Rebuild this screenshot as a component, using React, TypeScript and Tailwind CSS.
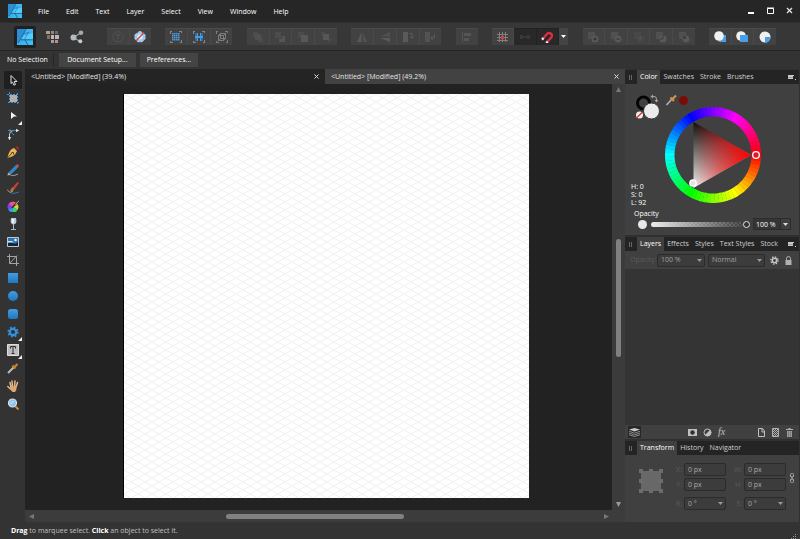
import type { ReactNode } from "react";
import { clsx } from "clsx";

/* ---------- data ---------- */

const menus = ["File", "Edit", "Text", "Layer", "Select", "View", "Window", "Help"];

const wheelStep = 5;
const wheelSegments = Array.from({ length: 360 / wheelStep }, (_, i) => i * wheelStep);

function ringPath(start: number, end: number, outer: number, inner: number) {
  const point = (deg: number, r: number) => {
    const a = (deg * Math.PI) / 180;
    return `${(48 + r * Math.cos(a)).toFixed(2)} ${(48 + r * Math.sin(a)).toFixed(2)}`;
  };
  return `M${point(start, outer)}A${outer} ${outer} 0 0 1 ${point(end, outer)}L${point(end, inner)}A${inner} ${inner} 0 0 0 ${point(start, inner)}Z`;
}

/* ---------- shared bits ---------- */

function Svg({ size = 12, children, className }: { size?: number; children: ReactNode; className?: string }) {
  return (
    <svg width={size} height={size} viewBox={`0 0 ${size} ${size}`} fill="none" className={clsx("shrink-0", className)} aria-hidden="true">
      {children}
    </svg>
  );
}

function Caret({ className }: { className?: string }) {
  return (
    <svg width="5" height="3" viewBox="0 0 5 3" className={className} aria-hidden="true">
      <path d="M0 0h5L2.500 3z" fill="currentColor" />
    </svg>
  );
}

function DesignerLogo({ size }: { size: number }) {
  return (
    <svg width={size} height={size} viewBox="0 0 16 16" aria-hidden="true">
      <defs>
        <linearGradient id="logo" x1="0" y1="0" x2="1" y2="1">
          <stop offset="0" stopColor="#2f9ee4" />
          <stop offset="1" stopColor="#3cc4f8" />
        </linearGradient>
      </defs>
      <rect width="16" height="16" fill="url(#logo)" />
      <path d="M0 0h8.500L0 14z" fill="#2a8fd6" />
      <path d="M9 0h7v2L6.500 5z" fill="#45b4f0" />
      <path d="M7 6.500 16 4v6.500H4.500z" fill="#57cbfa" />
      <path d="M9.200 0 1 14M3.500 10.800H16M8 10.800l3 5.200" stroke="#17507c" strokeWidth=".8" fill="none" />
      <path d="M11.500 3.500 7.200 10.800M6.500 5 12 3" stroke="#1f6ea6" strokeWidth=".6" fill="none" />
    </svg>
  );
}

/* ---------- toolbar ---------- */

function ToolButton({ label, children, dark }: { label: string; children: ReactNode; dark?: boolean }) {
  return (
    <button
      type="button"
      aria-label={label}
      className={clsx(
        "flex h-full flex-1 items-center justify-center border-t",
        dark ? "border-[#222222] bg-[#282828]" : "border-[#4a4a4a] bg-[#424242]"
      )}
    >
      {children}
    </button>
  );
}

function ToolGroup({ className, children }: { className: string; children: ReactNode }) {
  return <div className={clsx("flex h-[17px] divide-x divide-[#383838]", className)}>{children}</div>;
}

const flower = "M6 .5a2.300 2.300 0 0 1 2.300 2 2.300 2.300 0 0 1 2.600 3.300 2.300 2.300 0 0 1-1.400 3.200A2.300 2.300 0 0 1 6 10.500 2.300 2.300 0 0 1 2.500 9a2.300 2.300 0 0 1-1.400-3.200 2.300 2.300 0 0 1 2.600-3.300A2.300 2.300 0 0 1 6 .5z";

const corners = "M.5 2.500v-2h2M9.500.5h2v2M11.500 9.500v2h-2M2.500 11.500h-2v-2";

function DotGrid({ soft }: { soft?: boolean }) {
  const dots = [2, 4, 6, 8];
  return (
    <Svg>
      <path d={corners} stroke="#c8c8c8" strokeDasharray="1 1" />
      {soft && <path d="M2 2h3v3H2zM7 2h3v3H7zM2 7h3v3H2zM7 7h3v3H7z" fill="#2f6ca3" />}
      {soft
        ? <path d="M4 2h1v8H4zM7 2h1v8H7zM2 5h8v2H2z" fill="#4a9ade" />
        : dots.map((y) => dots.map((x) => <rect key={`${x}-${y}`} x={x} y={y} width={1.500} height={1.500} fill="#4a9ade" />))}
    </Svg>
  );
}

function BooleanIcon({ kind }: { kind: "add" | "subtract" | "intersect" | "divide" | "combine" }) {
  return (
    <Svg>
      <path d="M1 1h7v7H1z" fill={kind === "intersect" ? "#474747" : "#505050"} />
      <circle cx="8" cy="8" r="3.500" fill={kind === "intersect" ? "#484848" : "#585858"} />
      {kind === "add" && <path d="M8 6.500v3M6.500 8h3" stroke="#2c2c2c" />}
      {kind === "subtract" && <path d="M6.500 8h3" stroke="#2c2c2c" />}
      {kind === "intersect" && <path d="M5 8h3V5" fill="#555555" />}
      {kind === "divide" && <path d="M5 8h3V5" stroke="#3d3d3d" />}
      {kind === "combine" && <path d="M5 5h3v3H5z" fill="#3f3f3f" />}
    </Svg>
  );
}

function Toolbar() {
  return (
    <div role="toolbar" className="flex h-[29px] shrink-0 items-center border-y border-t-[#2e2e2e] border-b-[#262626] bg-[#373737] pr-6 pl-[14px]">
      <div className="flex w-[93px] shrink-0 items-center">
        <button type="button" aria-label="Designer Persona" className="flex h-[22px] w-[22px] items-center justify-center rounded-xs bg-[#202020]">
          <DesignerLogo size={16} />
        </button>
        <button type="button" aria-label="Pixel Persona" className="ml-[9px]">
          <Svg size={14}>
            <path d="M1 1h4v3H1z" fill="#b59a8e" />
            <path d="M6 1h3v3H6z" fill="#8f8580" />
            <path d="M10 1h3v3h-3z" fill="#6b6b6b" />
            <path d="M2 5h3v4H2z" fill="#7b716c" />
            <path d="M6 5h3v4H6z" fill="#d0b6a8" />
            <path d="M10 5h4v4h-4z" fill="#b9b9bd" />
            <path d="M6 10h3v3H6z" fill="#98a0a8" />
            <path d="M10 10h3v3h-3z" fill="#c4917f" />
          </Svg>
        </button>
        <button type="button" aria-label="Export Persona" className="ml-[11px]">
          <Svg size={14}>
            <path d="m3.500 7.500 7-4.500M3.500 7.500l6.500 4" stroke="#9aa2a6" strokeWidth="1.200" />
            <circle cx="3.500" cy="7.500" r="3" fill="#b5bcbf" />
            <circle cx="11" cy="2.800" r="2.300" fill="#a2aaae" />
            <circle cx="10.300" cy="11.300" r="2" fill="#c5ccd0" />
          </Svg>
        </button>
      </div>
      <div className="flex flex-1 justify-between">
        <ToolGroup className="w-[44px]">
          <ToolButton label="Synchronise Defaults">
            <Svg>
              <path d={flower} stroke="#525252" />
              <path d="M6 3v5M4 5l2-2 2 2" stroke="#525252" />
            </Svg>
          </ToolButton>
          <ToolButton label="Revert Defaults">
            <Svg>
              <path d={flower} fill="#9ccbed" stroke="#9ccbed" />
              <circle cx="6" cy="5.800" r="2.600" fill="#e2eef6" />
              <path d="m2 10 8-8.500" stroke="#d64545" strokeWidth="1.300" />
            </Svg>
          </ToolButton>
        </ToolGroup>
        <ToolGroup className="w-[67px]">
          <ToolButton label="Show Grid"><DotGrid /></ToolButton>
          <ToolButton label="Snap to Grid"><DotGrid soft /></ToolButton>
          <ToolButton label="Edit Plane">
            <Svg>
              <path d={corners} stroke="#b5b5b5" strokeDasharray="1 1" />
              <path d="M2.500 4.500h5v5h-5zM4.500 2.500h5v5h-5zM2.500 4.500l2-2M7.500 4.500l2-2M7.500 9.500l2-2M2.500 9.500l2-2" stroke="#8a8a8a" strokeWidth=".8" />
            </Svg>
          </ToolButton>
        </ToolGroup>
        <ToolGroup className="w-[90px]">
          <ToolButton label="Move to Back">
            <Svg><path d="M1 1h5v5H1zM6 6h5v5H6z" fill="#4b4b4b" /><path d="M3 3h6v6H3z" fill="#505050" /></Svg>
          </ToolButton>
          <ToolButton label="Back One">
            <Svg><path d="M1 1h6v6H1z" fill="#4c4c4c" /><path d="M8 5h3v6H5V8h3z" fill="#565656" /></Svg>
          </ToolButton>
          <ToolButton label="Forward One">
            <Svg><path d="M1 1h6v6H1z" fill="#4a4a4a" /><path d="M4 4h7v7H4z" fill="#575757" /></Svg>
          </ToolButton>
          <ToolButton label="Move to Front">
            <Svg><path d="M1 1h4v4H1zM8 8h3v3H8z" fill="#4a4a4a" /><path d="M3 3h6v6H3z" fill="#575757" /></Svg>
          </ToolButton>
        </ToolGroup>
        <ToolGroup className="w-[90px]">
          <ToolButton label="Flip Horizontal">
            <Svg><path d="M5.500 1v10H1z" fill="#585858" /><path d="M7 1v10h4z" fill="#505050" /></Svg>
          </ToolButton>
          <ToolButton label="Flip Vertical">
            <Svg><path d="M11 1v4.500H1z" fill="#505050" /><path d="M1 7h10v4z" fill="#5a5a5a" /></Svg>
          </ToolButton>
          <ToolButton label="Rotate Anticlockwise">
            <Svg><path d="M1 1h5v10H1z" fill="#5a5a5a" /><path d="M7 2.500h3v4M8.500 5.500l1.500 2 1.500-2" stroke="#5a5a5a" /></Svg>
          </ToolButton>
          <ToolButton label="Rotate Clockwise">
            <Svg><path d="M1 1h5v10H1z" fill="#525252" /><path d="M10.500 3v4h-3M8.500 5 7 7l1.500 2" stroke="#5a5a5a" /></Svg>
          </ToolButton>
        </ToolGroup>
        <ToolGroup className="w-[22px]">
          <ToolButton label="Alignment">
            <Svg><path d="M1.500 1v10" stroke="#555555" /><path d="M3 2h7v3H3zM3 7h5v3H3z" fill="#555555" /></Svg>
          </ToolButton>
        </ToolGroup>
        <ToolGroup className="w-[76px]">
          <ToolButton label="Force Pixel Alignment">
            <Svg>
              <path d="M2.500 1v10M5.500 1v10M8.500 1v10M0 3.500h11M0 6.500h11M0 9.500h11" stroke="#808080" />
              <path d="M4 5h3v3H4z" fill="#e03a34" />
            </Svg>
          </ToolButton>
          <ToolButton label="Move by Whole Pixels" dark>
            <Svg><path d="M1 4h3v4H1zM8 4h3v4H8z" fill="#393939" /><path d="M4 6h4" stroke="#444444" /></Svg>
          </ToolButton>
          <ToolButton label="Snapping" dark>
            <Svg>
              <path d="M2 7.500 6 3a2.700 2.700 0 0 1 4.200 3.500L6.200 11" stroke="#de2c43" strokeWidth="2.400" />
              <path d="M1 8.600 2.500 7M5.200 12.100l1.500-1.600" stroke="#e8e8e8" strokeWidth="2.400" />
            </Svg>
          </ToolButton>
          <button type="button" aria-label="Snapping options" className="flex w-[9px] items-center justify-center bg-[#444444] text-white">
            <Caret />
          </button>
        </ToolGroup>
        <ToolGroup className="w-[112px]">
          <ToolButton label="Add"><BooleanIcon kind="add" /></ToolButton>
          <ToolButton label="Subtract"><BooleanIcon kind="subtract" /></ToolButton>
          <ToolButton label="Intersect"><BooleanIcon kind="intersect" /></ToolButton>
          <ToolButton label="Divide"><BooleanIcon kind="divide" /></ToolButton>
          <ToolButton label="Combine"><BooleanIcon kind="combine" /></ToolButton>
        </ToolGroup>
        <ToolGroup className="w-[67px]">
          <ToolButton label="Insert Behind">
            <Svg><path d="M5 4h7v7H5z" fill="#4aa0e8" /><circle cx="5" cy="5" r="4.800" fill="#f0f0f0" /></Svg>
          </ToolButton>
          <ToolButton label="Insert on Top">
            <Svg><circle cx="5" cy="5" r="4.800" fill="#f0f0f0" /><path d="M4 4h8v7H4z" fill="#4aa0e8" /></Svg>
          </ToolButton>
          <ToolButton label="Insert Inside">
            <Svg><circle cx="6" cy="6" r="5.500" fill="#f0f0f0" /><path d="M6 6h5.500A5.500 5.500 0 0 1 6 11.500z" fill="#4aa0e8" /></Svg>
          </ToolButton>
        </ToolGroup>
      </div>
    </div>
  );
}

/* ---------- tools column ---------- */

const tools: { label: string; more?: boolean; icon: ReactNode }[] = [
  { label: "Move Tool", icon: <path d="m4 1.500 6 6H7.200l1.300 3-1.600.7-1.300-3L4 9.500z" fill="#1c1c1c" stroke="#e0e0e0" /> },
  {
    label: "Artboard Tool",
    icon: <><path d="M3 3h7v7H3z" fill="#b0b0b0" /><path d="M2.500 0v12M10.500 1v11M0 2.500h12M1 10.500h11" stroke="#3f97d6" strokeDasharray="2 1" /></>,
  },
  { label: "Node Tool", more: true, icon: <path d="m4 2 6 4.500H7L4 9z" fill="#f2f2f2" /> },
  {
    label: "Corner Tool",
    icon: <><path d="M2.500 12V7q0-4.500 5-4.500h4" stroke="#b9c4ca" /><path d="M1 2.500h10M3 1v3M2 2l5 5" stroke="#4888ad" /><path d="m9 .8 3 1.700-3 1.700zM.8 9l1.700 3 1.700-3z" fill="#e3e3e3" /></>,
  },
  {
    label: "Pen Tool",
    icon: <><path d="m8 1 3 3 1.500-1.500L10 0z" fill="#a62b27" /><path d="M7 2q-5 1-6.500 10Q8 10.500 10 5z" fill="#e9b45c" /><path d="m.5 12 4.500-5M4.500 6.500h2v2" stroke="#6b4517" /></>,
  },
  {
    label: "Pencil Tool",
    icon: <><path d="m1 9 8-8 2.500 2L4 10.500z" fill="#3385cc" /><path d="m1 9-.5 2.500L4 10.500z" fill="#e2bd94" /><path d="m8.500 1.500 2.500 2 1-2L10.500 0z" fill="#d9483f" /><path d="M3 12q6-.5 8-2" stroke="#8d9fae" /></>,
  },
  {
    label: "Vector Brush Tool",
    icon: <><path d="m6 5 4.500-5L12 1 8 6.500z" fill="#cf3c35" /><path d="M3 9q.5-3 3-4l2 1.500Q6 10 3 9z" fill="#b06a2f" /><path d="m0 7.500 3 3 3-1.500" stroke="#b5aa9c" /><path d="M4 11q4 1 8-1" stroke="#39759f" /></>,
  },
  {
    label: "Fill Tool",
    icon: (
      <>
        <path d="M6 7V1.500a5.500 5.500 0 0 1 4.700 2.800z" fill="#f25f3a" />
        <path d="M6 7V1.500a5.500 5.500 0 0 0-4.700 2.800z" fill="#e846cf" />
        <path d="M6 7 1.300 4.300a5.500 5.500 0 0 0 0 5.400z" fill="#8143ef" />
        <path d="M6 7 1.300 9.700A5.500 5.500 0 0 0 6 12.500z" fill="#3598ed" />
        <path d="M6 7v5.500a5.500 5.500 0 0 0 4.700-2.800z" fill="#34d763" />
        <path d="m6 7 4.700 2.700a5.500 5.500 0 0 0 0-5.400z" fill="#d6d43c" />
        <path d="M5 8l6.500-7.500" stroke="#2b2b2b" strokeWidth="1.300" />
        <path d="m8.500 4.500 3.500-4" stroke="#bcbcbc" />
      </>
    ),
  },
  {
    label: "Transparency Tool",
    icon: <><path d="M4 0h5q1.500 6-2.500 6.500Q2.500 6 4 0z" fill="#b9cbd8" /><path d="M5 1h2v4H5z" fill="#eef4f8" /><path d="M6.500 6v5M4 11.500h5" stroke="#aab8c2" /></>,
  },
  {
    label: "Place Image Tool",
    icon: <><path d="M.5 1.500h11v9H.5z" fill="#2474c0" stroke="#c5c5c5" /><path d="M1 7q3-2 5 0t5-1v4H1z" fill="#16233f" /><path d="M1 5h4l2 1.500H1z" fill="#d2e8f6" /><circle cx="8.500" cy="4" r="1.300" fill="#fff3c4" /></>,
  },
  { label: "Vector Crop Tool", icon: <path d="M2.500 0v9.500H12M0 2.500h9.500V12M3 9l7-7.500" stroke="#a2a2a2" /> },
  { label: "Rectangle Tool", icon: <path d="M1 1h10v10H1z" fill="url(#shape)" /> },
  { label: "Ellipse Tool", icon: <circle cx="6" cy="6" r="5" fill="url(#shape)" /> },
  { label: "Rounded Rectangle Tool", icon: <rect x="1" y="1" width="10" height="10" rx="2.500" fill="url(#shape)" /> },
  {
    label: "Cog Tool",
    more: true,
    icon: <><circle cx="6" cy="6" r="3.200" stroke="#3390dc" strokeWidth="2.200" /><circle cx="6" cy="6" r="4.700" stroke="#3390dc" strokeWidth="1.800" strokeDasharray="1.850 1.841" /></>,
  },
  {
    label: "Artistic Text Tool",
    more: true,
    icon: <><path d="M.5.5h11v11H.5z" fill="#bdbdbd" stroke="#dedede" /><path d="M3.500 4.500v-2h5v2M6 2.500v7M4.500 9.500h3" stroke="#303030" /></>,
  },
  {
    label: "Colour Picker Tool",
    icon: <><path d="m1 11 6-6" stroke="#b9bec2" strokeWidth="2" /><path d="m5.500 3.500 3 3M7 5.500 10.500 2" stroke="#c98225" strokeWidth="2.200" /></>,
  },
  {
    label: "View Tool",
    icon: <><path d="M4 7 3 2.500M5.500 6.500 5 1M7.500 6.500 8 1M9 7l1.500-4.500M3.500 9 .8 6.500" stroke="#e9b98a" strokeWidth="1.500" strokeLinecap="round" /><path d="M3 6.500h6.500Q10 10 8 12H5.500Q4 10.500 3 8.500z" fill="#dea773" /></>,
  },
  {
    label: "Zoom Tool",
    icon: <><path d="m8.500 8.500 3 3" stroke="#c98a35" strokeWidth="2" /><circle cx="5.500" cy="5" r="4" fill="#8cc6ee" stroke="#d7e1e8" strokeWidth="1.200" /><path d="m3.500 6 3-3" stroke="#e8f5fd" /></>,
  },
];

function ToolsColumn() {
  return (
    <nav aria-label="Tools" className="flex w-[25px] shrink-0 flex-col bg-[#333333] pt-0.5">
      <svg width="0" height="0" className="absolute" aria-hidden="true">
        <linearGradient id="shape" x1="0" y1="0" x2="0" y2="1">
          <stop offset="0" stopColor="#419ee5" />
          <stop offset="1" stopColor="#2276be" />
        </linearGradient>
      </svg>
      {tools.map((tool, i) => (
        <button
          key={tool.label}
          type="button"
          aria-label={tool.label}
          className={clsx("relative ml-1 flex h-[18px] w-[18px] items-center justify-center rounded-xs", i === 0 && "bg-[#1f1f1f]")}
        >
          <Svg>{tool.icon}</Svg>
          {tool.more && (
            <svg width="4" height="4" viewBox="0 0 4 4" className="absolute right-0 bottom-0" aria-hidden="true">
              <path d="M4 0v4H0z" fill="#eeeeee" />
            </svg>
          )}
        </button>
      ))}
    </nav>
  );
}

/* ---------- document area ---------- */

function DocumentTab({ title, active }: { title: string; active?: boolean }) {
  return (
    <div className={clsx("flex flex-1 items-center justify-between px-1.5 font-medium text-[#e6e6e6]", active ? "bg-[#242424]" : "bg-[#424242]")}>
      <button type="button">{title}</button>
      <button type="button" aria-label={`Close ${title}`}>
        <svg width="5" height="5" viewBox="0 0 5 5" stroke="#dddddd" aria-hidden="true">
          <path d="m.5.5 4 4m0-4-4 4" />
        </svg>
      </button>
    </div>
  );
}

function DocumentArea() {
  return (
    <main className="flex min-w-0 flex-1 flex-col">
      <div className="flex h-[15px] shrink-0">
        <DocumentTab title="<Untitled> [Modified] (39.4%)" active />
        <DocumentTab title="<Untitled> [Modified] (49.2%)" />
      </div>
      <div className="flex min-h-0 flex-1">
        <div className="flex min-w-0 flex-1 bg-[#222222] pt-[10px] pr-[83px] pb-3 pl-[98px]">
          <svg width="100%" height="100%" className="border-l border-black bg-white" aria-label="Artboard">
            <defs>
              <pattern id="iso" width="14" height="8" patternUnits="userSpaceOnUse">
                <path d="m0 0 14 8M14 0 0 8" stroke="#ededed" strokeWidth=".9" />
              </pattern>
            </defs>
            <rect width="100%" height="100%" fill="url(#iso)" />
          </svg>
        </div>
        <div className="flex w-[13px] flex-col items-center justify-between bg-[#3b3b3b] py-[3px]">
          <svg width="5" height="5" viewBox="0 0 5 5" aria-hidden="true"><path d="M0 5h5L2.500 0z" fill="#777777" /></svg>
          <div className="flex w-full flex-1 flex-col items-center pt-[147px] pb-[145px]">
            <div className="w-[5px] flex-1 rounded-full bg-[#808080]" />
          </div>
          <svg width="5" height="5" viewBox="0 0 5 5" aria-hidden="true"><path d="M0 0h5L2.500 5z" fill="#999999" /></svg>
        </div>
      </div>
      <div className="flex h-3 shrink-0 items-center bg-[#3c3c3c] pr-4 pl-1">
        <svg width="5" height="5" viewBox="0 0 5 5" aria-hidden="true"><path d="M5 0v5L0 2.500z" fill="#777777" /></svg>
        <div className="flex flex-1 pr-[200px] pl-[192px]">
          <div className="h-[5px] flex-1 rounded-full bg-[#808080]" />
        </div>
        <svg width="5" height="5" viewBox="0 0 5 5" aria-hidden="true"><path d="M0 0v5l5-2.500z" fill="#777777" /></svg>
      </div>
    </main>
  );
}

/* ---------- panels ---------- */

function PanelTabs({ tabs, menu }: { tabs: string[]; menu?: boolean }) {
  return (
    <div className="flex h-[15px] shrink-0 items-stretch border-t border-[#303030] bg-[#242424] pr-[3px] pl-1">
      <svg width="3" height="5" viewBox="0 0 3 5" className="mr-[5px] self-center" aria-hidden="true">
        <path d="M.5 0v5M2.500 0v5" stroke="#666666" />
      </svg>
      <div role="tablist" className="flex flex-1">
        {tabs.map((tab, i) => (
          <button
            key={tab}
            type="button"
            role="tab"
            aria-selected={i === 0}
            className={clsx("px-[3px] whitespace-nowrap", i === 0 ? "bg-[#404040] text-white" : "text-[#d0d0d0]")}
          >
            {tab}
          </button>
        ))}
      </div>
      {menu && (
        <button type="button" aria-label="Panel preferences">
          <svg width="8" height="5" viewBox="0 0 8 5" aria-hidden="true">
            <path d="M0 0h6v1H0zM0 1h5v3H0z" fill="#c9c9c9" />
            <path d="M0 2.500h5" stroke="#8a8a8a" strokeWidth=".6" />
            <path d="M7 4h1v1H7z" fill="#c9c9c9" />
          </svg>
        </button>
      )}
    </div>
  );
}

function ColorWheel() {
  return (
    <svg width="96" height="96" viewBox="0 0 96 96" role="img" aria-label="HSL colour wheel">
      <defs>
        <linearGradient id="light" x1="0" y1="0" x2="0" y2="1">
          <stop offset="0" stopColor="#0d0d0d" />
          <stop offset="1" stopColor="#f4f4f4" />
        </linearGradient>
        <linearGradient id="red" x1="0" y1="0" x2="1" y2="0">
          <stop offset="0" stopColor="#ff0000" stopOpacity="0" />
          <stop offset="1" stopColor="#ff0000" />
        </linearGradient>
      </defs>
      {wheelSegments.map((hue) => (
        <path key={hue} d={ringPath(hue - 2.500, hue + 2.800, 48, 38.500)} fill={`hsl(${hue} 100% 50%)`} />
      ))}
      <path d="M28.500 15v66L86 48z" fill="url(#light)" />
      <path d="M28.500 15v66L86 48z" fill="url(#red)" />
      <circle cx="91" cy="48" r="3.300" fill="#e8122a" stroke="#ffffff" strokeWidth="1.300" />
      <circle cx="28" cy="76" r="3.200" fill="#e5e5e5" stroke="#ffffff" strokeWidth="1.300" />
    </svg>
  );
}

function ColorPanel() {
  return (
    <section className="shrink-0 bg-[#404040] pb-[5px]">
      <PanelTabs tabs={["Color", "Swatches", "Stroke", "Brushes"]} menu />
      <div className="flex pt-[10px]">
        <div className="flex w-10 shrink-0 flex-col justify-between">
          <svg width="26" height="26" viewBox="0 0 26 26" className="ml-[10px]" aria-label="Stroke and fill">
            <circle cx="8.500" cy="9" r="6" fill="none" stroke="#050505" strokeWidth="3" />
            <circle cx="16.500" cy="17" r="8" fill="#ebebeb" stroke="#383838" />
            <circle cx="4.500" cy="21" r="3.500" fill="#eeeeee" />
            <path d="m2 23.500 5-5" stroke="#e02c2c" strokeWidth="1.200" />
            <path d="M17.500 2.500h1.500q2.500 0 2.500 2.500v1.500" stroke="#a6a6a6" fill="none" />
            <path d="M18 .5v4l-2.500-2zM19.500 6h4l-2 2.500z" fill="#a6a6a6" />
          </svg>
          <div className="ml-1.5 leading-2 text-white">
            <p>H: 0</p>
            <p>S: 0</p>
            <p>L: 92</p>
          </div>
        </div>
        <div className="flex flex-1 flex-col gap-px pb-1">
          <div className="flex items-center gap-0.5">
            <button type="button" aria-label="Pick colour">
              <Svg>
                <path d="m1.500 11 5-5.500" stroke="#a9aeb2" strokeWidth="1.800" />
                <path d="m5.500 3.500 3.500 3.500M7.500 5 11 1.500" stroke="#cf9445" strokeWidth="2.200" />
              </Svg>
            </button>
            <button type="button" aria-label="Picked colour" className="h-[9px] w-[9px] rounded-full bg-[#7c0a06]" />
          </div>
          <ColorWheel />
        </div>
      </div>
      <div className="mt-[3px] pr-2 pl-[9px]">
        <label htmlFor="opacity" className="block leading-2 text-white">Opacity</label>
        <div className="flex items-center">
          <span className="mr-1 ml-1 h-[9px] w-[9px] shrink-0 rounded-full bg-[#e8e8e8]" />
          <input
            id="opacity"
            type="range"
            defaultValue={100}
            className="h-[5px] min-w-0 flex-1 appearance-none rounded-full bg-[linear-gradient(to_right,#ededed,#ededed00),repeating-conic-gradient(#2c2c2c_0_25%,#484848_0_50%)] bg-size-[100%_100%,4px_4px] [&::-webkit-slider-thumb]:h-[7px] [&::-webkit-slider-thumb]:w-[7px] [&::-webkit-slider-thumb]:appearance-none [&::-webkit-slider-thumb]:rounded-full [&::-webkit-slider-thumb]:border [&::-webkit-slider-thumb]:border-[#e0e0e0] [&::-webkit-slider-thumb]:bg-[#333333]"
          />
          <input aria-label="Opacity value" defaultValue="100 %" className="ml-[3px] h-3 w-7 border border-[#2c2c2c] bg-[#353535] px-0.5 text-white" />
          <button type="button" aria-label="Opacity presets" className="flex h-3 w-[10px] items-center justify-center border border-l-0 border-[#2c2c2c] text-[#dddddd]">
            <Caret />
          </button>
        </div>
      </div>
    </section>
  );
}

function Dropdown({ label, value, className }: { label: string; value: string; className: string }) {
  return (
    <span className={clsx("relative flex", className)}>
      <select aria-label={label} className="h-[13px] w-full appearance-none rounded-xs border border-[#2b2b2b] bg-[#3c3c3c] pl-[3px] text-[#a0a0a0]">
        <option>{value}</option>
      </select>
      <Caret className="pointer-events-none absolute top-[5px] right-[3px] text-[#999999]" />
    </span>
  );
}

function LayersPanel() {
  return (
    <section className="flex min-h-0 flex-1 flex-col bg-[#343434]">
      <PanelTabs tabs={["Layers", "Effects", "Styles", "Text Styles", "Stock"]} menu />
      <div className="flex h-[18px] shrink-0 items-center gap-[3px] bg-[#404040] pr-1.5 pl-[5px]">
        <span className="w-6 text-[#5a5a5a]">Opacity:</span>
        <Dropdown label="Layer opacity" value="100 %" className="w-12" />
        <Dropdown label="Blend mode" value="Normal" className="flex-1" />
        <button type="button" aria-label="Blend options" className="ml-0.5">
          <Svg size={9}>
            <circle cx="4.500" cy="4.500" r="2.200" stroke="#c4c4c4" strokeWidth="1.600" />
            <circle cx="4.500" cy="4.500" r="3.600" stroke="#c4c4c4" strokeWidth="1.400" strokeDasharray="1.400 1.427" />
          </Svg>
        </button>
        <button type="button" aria-label="Lock" className="ml-0.5">
          <Svg size={9}>
            <path d="M2.500 4V2.500a2 2 0 0 1 4 0V4" stroke="#b0b0b0" />
            <path d="M1.500 4h6v5h-6z" fill="#b0b0b0" />
          </Svg>
        </button>
      </div>
      <div className="flex-1" />
      <div className="flex h-[14px] shrink-0 items-center bg-[#404040] pr-[5px] pl-[3px]">
        <button type="button" aria-label="Edit all layers" className="flex h-3 w-[13px] items-center justify-center bg-[#262626]">
          <svg width="11" height="9" viewBox="0 0 11 9" aria-hidden="true">
            <path d="M0 1.500 5.500 0 11 1.500 5.500 3.500z" fill="#c8c8c8" />
            <path d="m0 3.200 5.500 2L11 3.200M0 5l5.500 2L11 5M0 6.800l5.500 1.700L11 6.800" stroke="#a5a5a5" strokeWidth=".8" fill="none" />
          </svg>
        </button>
        <div className="ml-[47px] flex items-center gap-[6px]">
          <button type="button" aria-label="Mask layer">
            <Svg size={9}><path d="M0 1h9v7H0z" fill="#c0c0c0" /><circle cx="4.500" cy="4.500" r="2.200" fill="#303030" /></Svg>
          </button>
          <button type="button" aria-label="Adjustments">
            <Svg size={9}><circle cx="4.500" cy="4.500" r="3.500" stroke="#c0c0c0" /><path d="M7 2A3.500 3.500 0 0 1 2 7z" fill="#c0c0c0" /></Svg>
          </button>
          <button type="button" className="font-['Liberation_Serif',serif] text-[10px] leading-3 text-[#c0c0c0] italic">fx</button>
        </div>
        <div className="ml-auto flex items-center gap-[5px]">
          <button type="button" aria-label="Add layer">
            <Svg size={9}><path d="M1.500.5h4l2 2.500v5.500h-6zM5 .5V4h3" stroke="#c0c0c0" /></Svg>
          </button>
          <button type="button" aria-label="Add pixel layer">
            <Svg size={9}>
              <path d="M1.500.5h6v8h-6z" stroke="#b0b0b0" />
              <path d="M2 1h1v1H2zM4 1h1v1H4zM6 1h1v1H6zM3 2h1v1H3zM5 2h1v1H5zM2 3h1v1H2zM4 3h1v1H4zM6 3h1v1H6zM3 4h1v1H3zM5 4h1v1H5zM2 5h1v1H2zM4 5h1v1H4zM6 5h1v1H6zM3 6h1v1H3zM5 6h1v1H5zM2 7h1v1H2zM4 7h1v1H4zM6 7h1v1H6z" fill="#b0b0b0" />
            </Svg>
          </button>
          <button type="button" aria-label="Delete layer">
            <Svg size={9}><path d="M1 1.500h7M3.500.5h2" stroke="#b0b0b0" /><path d="M2 3h5v6H2z" fill="#9c9c9c" /><path d="M3.500 3.500v5M5.500 3.500v5" stroke="#5c5c5c" strokeWidth=".6" /></Svg>
          </button>
        </div>
      </div>
    </section>
  );
}

function TransformField({ name, value, dropdown }: { name: string; value: string; dropdown?: boolean }) {
  return (
    <div className="flex items-center gap-0.5">
      <label htmlFor={`field-${name}`} className="w-2 text-right text-[#5c5c5c]">{name}:</label>
      <span className="relative flex">
        {dropdown ? (
          <select id={`field-${name}`} className="h-[13px] w-[42px] appearance-none rounded-xs border border-[#2b2b2b] bg-[#3c3c3c] pl-[3px] text-[#a8a8a8]">
            <option>{value}</option>
          </select>
        ) : (
          <input id={`field-${name}`} defaultValue={value} className="h-[13px] w-[42px] rounded-xs border border-[#2b2b2b] bg-[#3c3c3c] pl-[3px] text-[#a8a8a8]" />
        )}
        {dropdown && <Caret className="pointer-events-none absolute top-[5px] right-[3px] text-[#999999]" />}
      </span>
    </div>
  );
}

function TransformPanel() {
  return (
    <section className="shrink-0 bg-[#404040]">
      <PanelTabs tabs={["Transform", "History", "Navigator"]} />
      <div className="flex h-[67px] pt-2 pl-[14px]">
        <svg width="24" height="24" viewBox="0 0 24 24" className="mt-1.5 shrink-0" aria-label="Anchor point">
          <path d="M2 2h20v20H2z" fill="#686868" />
          <path d="M0 0h4v4H0zM10 0h4v4h-4zM20 0h4v4h-4zM0 10h4v4H0zM20 10h4v4h-4zM0 20h4v4H0zM10 20h4v4h-4zM20 20h4v4h-4z" fill="#6c6c6c" />
        </svg>
        <div className="ml-[11px]">
          <div className="grid grid-cols-2 gap-x-2 gap-y-0.5">
            <TransformField name="X" value="0 px" />
            <TransformField name="W" value="0 px" />
            <TransformField name="Y" value="0 px" />
            <TransformField name="H" value="0 px" />
          </div>
          <div className="mt-1.5 grid grid-cols-2 gap-x-2">
            <TransformField name="R" value="0 °" dropdown />
            <TransformField name="S" value="0 °" dropdown />
          </div>
        </div>
        <button type="button" aria-label="Link dimensions" className="mt-[10px] ml-1 self-start">
          <svg width="4" height="10" viewBox="0 0 4 10" fill="none" stroke="#a8a8a8" aria-hidden="true">
            <rect x=".5" y=".5" width="3" height="3.500" rx="1" />
            <rect x=".5" y="6" width="3" height="3.500" rx="1" />
            <path d="M2 3v4" />
          </svg>
        </button>
      </div>
    </section>
  );
}

/* ---------- window ---------- */

export default function App() {
  return (
    <div className="flex h-screen flex-col overflow-hidden bg-[#333333] font-['Open_Sans','Noto_Sans',sans-serif] text-[7px] leading-[10px] text-[#e6e6e6]">
      <header className="flex h-[22px] shrink-0 items-center bg-[#262626] pr-[7px] pl-2">
        <DesignerLogo size={14} />
        <nav className="ml-4 flex gap-[17px] pt-0.5 font-medium text-white">
          {menus.map((menu) => (
            <button key={menu} type="button">{menu}</button>
          ))}
        </nav>
        <div className="ml-auto flex gap-3 pb-0.5">
          <button type="button" aria-label="Minimize"><Svg size={7}><path d="M0 5h6v2H0z" fill="#ffffff" /></Svg></button>
          <button type="button" aria-label="Maximize"><Svg size={7}><path d="M.5 1.500h6v5h-6zM0 1h7" stroke="#ffffff" /></Svg></button>
          <button type="button" aria-label="Close"><Svg size={7}><path d="m1 1 5 5m0-5L1 6" stroke="#e2e2e2" strokeWidth="1.300" /></Svg></button>
        </div>
      </header>
      <Toolbar />
      <div className="flex h-[18px] shrink-0 items-center bg-[#333333] pl-[7px] font-medium text-white">
        <span>No Selection</span>
        <span className="mx-[5px] h-3 w-px bg-[#242424]" />
        <button type="button" className="h-[14px] w-[77px] bg-[#444444]">Document Setup...</button>
        <button type="button" className="ml-1 h-[14px] w-[58px] bg-[#444444]">Preferences...</button>
      </div>
      <div className="flex min-h-0 flex-1">
        <ToolsColumn />
        <DocumentArea />
        <aside className="flex w-[175px] shrink-0 flex-col gap-px border-r border-[#303030] bg-[#2f2f2f]">
          <ColorPanel />
          <LayersPanel />
          <TransformPanel />
        </aside>
      </div>
      <footer className="flex h-[17px] shrink-0 items-center justify-between bg-[#333333] pr-1 pl-[11px] font-medium text-[#c0c0c0]">
        <p>
          <b className="text-white">Drag</b> to marquee select. <b className="text-white">Click</b> an object to select it.
        </p>
        <svg width="5" height="5" viewBox="0 0 5 5" className="self-end" aria-hidden="true">
          <path d="M4 0h1v1H4zM2 2h1v1H2zM4 2h1v1H4zM0 4h1v1H0zM2 4h1v1H2zM4 4h1v1H4z" fill="#9a9a9a" />
        </svg>
      </footer>
    </div>
  );
}
